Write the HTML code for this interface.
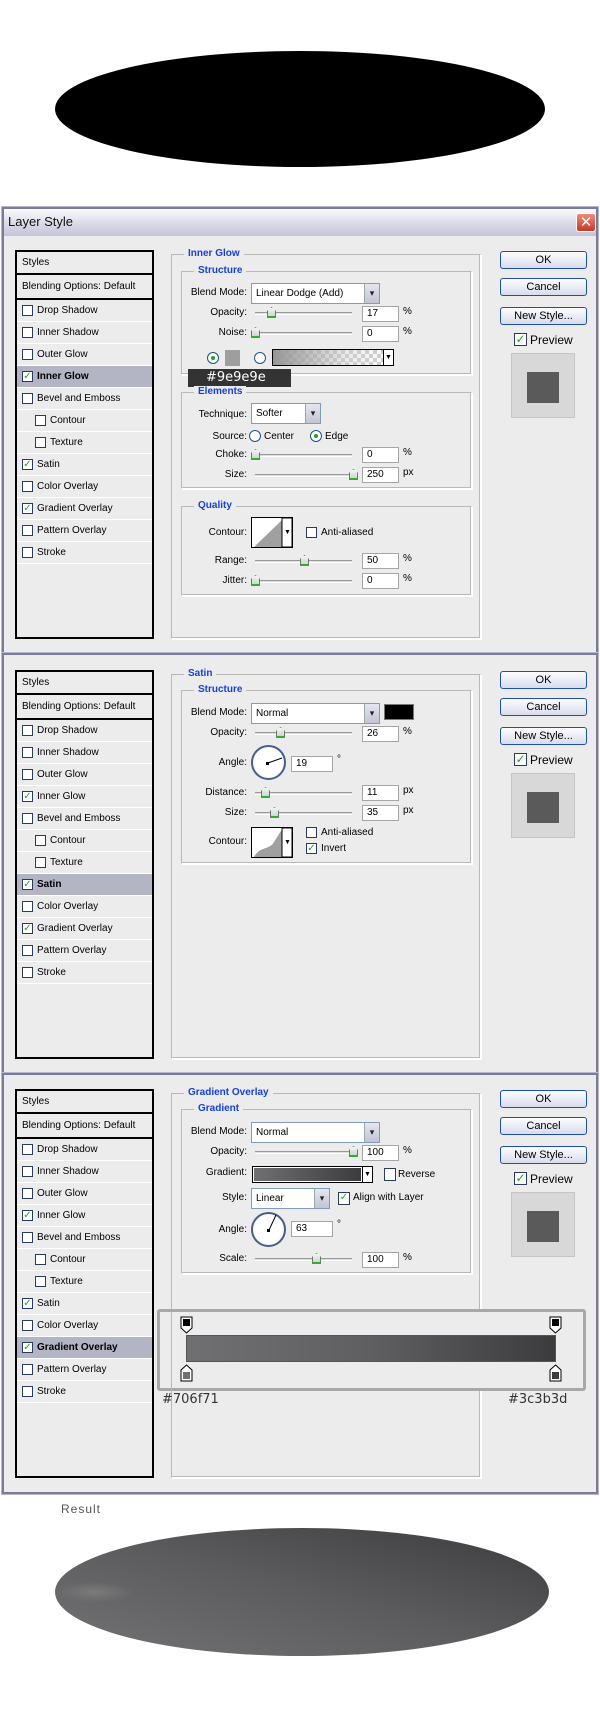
<!DOCTYPE html>
<html><head><meta charset="utf-8">
<style>
*{margin:0;padding:0;box-sizing:border-box}
body{width:600px;height:1709px;background:#fff;position:relative;overflow:hidden;font-family:"Liberation Sans","DejaVu Sans",sans-serif;font-size:10px;color:#000}
.a{position:absolute}
.frame{position:absolute;left:2px;width:596px;background:#ececec;border:2px solid #7a7a9c;outline:1px solid #b8b8cc}
.org{position:absolute;left:0;width:600px;height:440px}
.styles{position:absolute;left:15px;top:43px;width:139px;height:389px;border:2px solid #000;background:#ececec}
.row{position:absolute;left:0;width:135px;height:22px;border-bottom:1px solid #fff;line-height:21px;padding-left:20px;white-space:nowrap}
.row.sub{padding-left:33px}
.row.hl{background:#b3b5c4;font-weight:bold}
.cb{position:absolute;width:11px;height:11px;border:1px solid #2b3b5c;background:#fff;font-size:10px;line-height:9px;color:#21a121;text-align:center;font-weight:bold}
.row .cb{left:5px;top:5px}
.row.sub .cb{left:18px}
.grp{position:absolute;border:1px solid #b9b9b9;border-right-color:#fff;border-bottom-color:#fff;box-shadow:inset -1px -1px 0 #b9b9b9,1px 1px 0 #fff}
.gt{position:absolute;background:#ececec;color:#1740d8;font-weight:bold;padding:0 4px;font-size:10px;line-height:12px}
.lbl{position:absolute;text-align:right;width:100px;line-height:12px}
.sel{position:absolute;height:21px;background:#fff;border:1px solid #7f9db9;line-height:19px;padding-left:4px}
.sel b{position:absolute;right:0;top:0;width:15px;height:19px;background:linear-gradient(#e6e6f0,#c2c4d4);border-left:1px solid #9aa;font-size:9px;text-align:center;line-height:19px;color:#222}
.trk{position:absolute;height:3px;border-top:1px solid #999;border-bottom:1px solid #fff;background:#ddd;width:97px;left:255px}
.th{position:absolute;width:9px;height:11px;background:linear-gradient(#f4f4f4,#cfd6cf);border:1px solid #6a7a6a;border-bottom:2px solid #2fae2f;clip-path:polygon(50% 0,100% 35%,100% 100%,0 100%,0 35%)}
.inp{position:absolute;width:37px;height:16px;background:#fff;border:1px solid #a5a5a5;line-height:14px;padding-left:4px}
.unit{position:absolute;line-height:12px}
.btn{position:absolute;left:500px;width:87px;height:18px;border:1px solid #1f4fae;border-radius:3px;background:linear-gradient(#fdfdff,#d9dcec);text-align:center;line-height:16px;font-size:11px}
.pv{position:absolute;left:511px;width:64px;height:65px;background:#d8d8d8;border:1px solid #c4c4c4}
.pv i{position:absolute;left:15px;top:18px;width:32px;height:31px;background:#5a5a5a}
.rad{position:absolute;width:12px;height:12px;border-radius:50%;border:1px solid #1d5283;background:#fff}
.rad.on::after{content:"";position:absolute;left:3px;top:3px;width:4px;height:4px;border-radius:50%;background:#21a121}
.dial{position:absolute;width:35px;height:35px;border-radius:50%;border:2px solid #4a5d8a;background:radial-gradient(#fff 60%,#dde);}
</style></head><body>

<svg class="a" style="left:0;top:0" width="600" height="200"><ellipse cx="300" cy="109" rx="245" ry="58" fill="#000"/></svg>

<!-- PANEL 1 -->
<div class="frame" style="top:207px;height:447px"></div>
<div class="a" style="left:4px;top:209px;width:592px;height:27px;background:linear-gradient(#fafafd,#d7d7e6 60%,#c4c4d8)"></div>
<div class="a" style="left:8px;top:214px;font-size:13px;line-height:16px;color:#111">Layer Style</div>
<div class="a" style="left:576px;top:213px;width:20px;height:19px;background:linear-gradient(#f08a7a,#c83a24);border:1px solid #fff;border-radius:3px;color:#fff;text-align:center;font-size:15px;line-height:17px">✕</div>

<div class="org" style="top:207px">
<div class="styles">
<div class="row" style="top:0;height:23px;padding-left:5px;border-bottom:2px solid #000">Styles</div>
<div class="row" style="top:23px;height:25px;padding-left:5px;border-bottom:2px solid #000;line-height:23px">Blending Options: Default</div>
<div class="row" style="top:48px"><span class="cb"></span>Drop Shadow</div>
<div class="row" style="top:70px"><span class="cb"></span>Inner Shadow</div>
<div class="row" style="top:92px"><span class="cb"></span>Outer Glow</div>
<div class="row hl" style="top:114px"><span class="cb">✓</span>Inner Glow</div>
<div class="row" style="top:136px"><span class="cb"></span>Bevel and Emboss</div>
<div class="row sub" style="top:158px"><span class="cb"></span>Contour</div>
<div class="row sub" style="top:180px"><span class="cb"></span>Texture</div>
<div class="row" style="top:202px"><span class="cb">✓</span>Satin</div>
<div class="row" style="top:224px"><span class="cb"></span>Color Overlay</div>
<div class="row" style="top:246px"><span class="cb">✓</span>Gradient Overlay</div>
<div class="row" style="top:268px"><span class="cb"></span>Pattern Overlay</div>
<div class="row" style="top:290px"><span class="cb"></span>Stroke</div>
</div>
<div class="grp" style="left:171px;top:47px;width:310px;height:385px"></div><div class="gt" style="left:184px;top:41px">Inner Glow</div>
<div class="grp" style="left:181px;top:64px;width:291px;height:104px"></div><div class="gt" style="left:194px;top:58px">Structure</div>
<div class="lbl" style="left:147px;top:80px">Blend Mode:</div>
<div class="sel" style="left:251px;top:76px;width:129px">Linear Dodge (Add)<b>▾</b></div>
<div class="lbl" style="left:147px;top:100px">Opacity:</div><div class="trk" style="top:105px"></div><div class="th" style="left:267px;top:100px"></div><div class="inp" style="left:362px;top:99px">17</div><div class="unit" style="left:403px;top:99px">%</div>
<div class="lbl" style="left:147px;top:120px">Noise:</div><div class="trk" style="top:125px"></div><div class="th" style="left:251px;top:120px"></div><div class="inp" style="left:362px;top:119px">0</div><div class="unit" style="left:403px;top:119px">%</div>
<div class="rad on" style="left:207px;top:145px"></div><div class="a" style="left:225px;top:143px;width:15px;height:16px;background:#9e9e9e"></div>
<div class="rad" style="left:254px;top:145px"></div>
<div class="a" style="left:272px;top:142px;width:122px;height:17px;border:1px solid #000;background:linear-gradient(90deg,rgba(150,150,150,1),rgba(200,200,200,.4) 60%,rgba(255,255,255,0)),repeating-conic-gradient(#d0d0d0 0 25%,#fff 0 50%) 0 0/8px 8px;"></div>
<div class="a" style="left:383px;top:143px;width:10px;height:15px;background:#fff;border-left:1px solid #000;font-size:7px;text-align:center;line-height:15px">▼</div>
<div class="a" style="left:188px;top:162px;width:103px;height:18px;background:#333;color:#fff;font-size:13px;line-height:18px;padding-left:18px;font-family:'DejaVu Sans',sans-serif">#9e9e9e</div>
<div class="grp" style="left:181px;top:185px;width:291px;height:97px"></div><div class="gt" style="left:194px;top:179px">Elements</div>
<div class="lbl" style="left:147px;top:202px">Technique:</div>
<div class="sel" style="left:251px;top:196px;width:70px">Softer<b>▾</b></div>
<div class="lbl" style="left:147px;top:224px">Source:</div>
<div class="rad" style="left:249px;top:223px"></div><div class="unit" style="left:264px;top:224px">Center</div>
<div class="rad on" style="left:310px;top:223px"></div><div class="unit" style="left:325px;top:224px">Edge</div>
<div class="lbl" style="left:147px;top:242px">Choke:</div><div class="trk" style="top:247px"></div><div class="th" style="left:251px;top:242px"></div><div class="inp" style="left:362px;top:240px">0</div><div class="unit" style="left:403px;top:240px">%</div>
<div class="lbl" style="left:147px;top:262px">Size:</div><div class="trk" style="top:267px"></div><div class="th" style="left:349px;top:262px"></div><div class="inp" style="left:362px;top:260px">250</div><div class="unit" style="left:403px;top:260px">px</div>
<div class="grp" style="left:181px;top:299px;width:291px;height:90px"></div><div class="gt" style="left:194px;top:293px">Quality</div>
<div class="lbl" style="left:147px;top:320px">Contour:</div>
<div class="a" style="left:251px;top:310px;width:42px;height:31px;background:#fff;border:1px solid #000"><svg width="40" height="29"><polygon points="2,29 30,2 30,29" fill="#a0a0a0"/><rect x="30" y="0" width="10" height="29" fill="#fff" stroke="#000"/><text x="32" y="16" font-size="7">▼</text></svg></div>
<div class="cb" style="left:306px;top:320px"></div><div class="unit" style="left:321px;top:320px">Anti-aliased</div>
<div class="lbl" style="left:147px;top:348px">Range:</div><div class="trk" style="top:353px"></div><div class="th" style="left:300px;top:348px"></div><div class="inp" style="left:362px;top:346px">50</div><div class="unit" style="left:403px;top:346px">%</div>
<div class="lbl" style="left:147px;top:368px">Jitter:</div><div class="trk" style="top:373px"></div><div class="th" style="left:251px;top:368px"></div><div class="inp" style="left:362px;top:366px">0</div><div class="unit" style="left:403px;top:366px">%</div>
<div class="btn" style="top:44px">OK</div><div class="btn" style="top:71px">Cancel</div><div class="btn" style="top:100px">New Style...</div>
<div class="cb" style="left:514px;top:126px;width:13px;height:13px;font-size:12px;line-height:11px">✓</div><div class="unit" style="left:530px;top:126px;font-size:12px;line-height:14px">Preview</div>
<div class="pv" style="top:146px"><i></i></div>
</div>

<!-- PANEL 2 -->
<div class="frame" style="top:653px;height:421px"></div>
<div class="org" style="top:627px">
<div class="styles">
<div class="row" style="top:0;height:23px;padding-left:5px;border-bottom:2px solid #000">Styles</div>
<div class="row" style="top:23px;height:25px;padding-left:5px;border-bottom:2px solid #000;line-height:23px">Blending Options: Default</div>
<div class="row" style="top:48px"><span class="cb"></span>Drop Shadow</div>
<div class="row" style="top:70px"><span class="cb"></span>Inner Shadow</div>
<div class="row" style="top:92px"><span class="cb"></span>Outer Glow</div>
<div class="row" style="top:114px"><span class="cb">✓</span>Inner Glow</div>
<div class="row" style="top:136px"><span class="cb"></span>Bevel and Emboss</div>
<div class="row sub" style="top:158px"><span class="cb"></span>Contour</div>
<div class="row sub" style="top:180px"><span class="cb"></span>Texture</div>
<div class="row hl" style="top:202px"><span class="cb">✓</span>Satin</div>
<div class="row" style="top:224px"><span class="cb"></span>Color Overlay</div>
<div class="row" style="top:246px"><span class="cb">✓</span>Gradient Overlay</div>
<div class="row" style="top:268px"><span class="cb"></span>Pattern Overlay</div>
<div class="row" style="top:290px"><span class="cb"></span>Stroke</div>
</div>
<div class="grp" style="left:171px;top:47px;width:310px;height:385px"></div><div class="gt" style="left:184px;top:41px">Satin</div>
<div class="grp" style="left:181px;top:63px;width:291px;height:174px"></div><div class="gt" style="left:194px;top:57px">Structure</div>
<div class="lbl" style="left:147px;top:80px">Blend Mode:</div>
<div class="sel" style="left:251px;top:76px;width:129px">Normal<b>▾</b></div>
<div class="a" style="left:384px;top:77px;width:30px;height:16px;background:#000;border:1px solid #777"></div>
<div class="lbl" style="left:147px;top:100px">Opacity:</div><div class="trk" style="top:105px"></div><div class="th" style="left:276px;top:100px"></div><div class="inp" style="left:362px;top:99px">26</div><div class="unit" style="left:403px;top:99px">%</div>
<div class="lbl" style="left:147px;top:130px">Angle:</div>
<div class="dial" style="left:251px;top:118px"><svg width="31" height="31" class="a"><line x1="15" y1="16" x2="29" y2="11" stroke="#000" stroke-width="1"/><rect x="13" y="15" width="3" height="3"/></svg></div>
<div class="inp" style="left:291px;top:129px;width:42px">19</div><div class="unit" style="left:337px;top:127px">°</div>
<div class="lbl" style="left:147px;top:160px">Distance:</div><div class="trk" style="top:165px"></div><div class="th" style="left:261px;top:160px"></div><div class="inp" style="left:362px;top:158px">11</div><div class="unit" style="left:403px;top:158px">px</div>
<div class="lbl" style="left:147px;top:180px">Size:</div><div class="trk" style="top:185px"></div><div class="th" style="left:270px;top:180px"></div><div class="inp" style="left:362px;top:178px">35</div><div class="unit" style="left:403px;top:178px">px</div>
<div class="lbl" style="left:147px;top:209px">Contour:</div>
<div class="a" style="left:251px;top:200px;width:42px;height:31px;background:#fff;border:1px solid #000"><svg width="40" height="29"><path d="M2,29 C8,18 18,22 22,14 C26,8 28,4 30,2 L30,29 Z" fill="#a0a0a0"/><rect x="30" y="0" width="10" height="29" fill="#fff" stroke="#000"/><text x="32" y="16" font-size="7">▼</text></svg></div>
<div class="cb" style="left:306px;top:200px"></div><div class="unit" style="left:321px;top:200px">Anti-aliased</div>
<div class="cb" style="left:306px;top:216px">✓</div><div class="unit" style="left:321px;top:216px">Invert</div>
<div class="btn" style="top:44px">OK</div><div class="btn" style="top:71px">Cancel</div><div class="btn" style="top:100px">New Style...</div>
<div class="cb" style="left:514px;top:126px;width:13px;height:13px;font-size:12px;line-height:11px">✓</div><div class="unit" style="left:530px;top:126px;font-size:12px;line-height:14px">Preview</div>
<div class="pv" style="top:146px"><i></i></div>
</div>

<!-- PANEL 3 -->
<div class="frame" style="top:1073px;height:421px"></div>
<div class="org" style="top:1046px">
<div class="styles">
<div class="row" style="top:0;height:23px;padding-left:5px;border-bottom:2px solid #000">Styles</div>
<div class="row" style="top:23px;height:25px;padding-left:5px;border-bottom:2px solid #000;line-height:23px">Blending Options: Default</div>
<div class="row" style="top:48px"><span class="cb"></span>Drop Shadow</div>
<div class="row" style="top:70px"><span class="cb"></span>Inner Shadow</div>
<div class="row" style="top:92px"><span class="cb"></span>Outer Glow</div>
<div class="row" style="top:114px"><span class="cb">✓</span>Inner Glow</div>
<div class="row" style="top:136px"><span class="cb"></span>Bevel and Emboss</div>
<div class="row sub" style="top:158px"><span class="cb"></span>Contour</div>
<div class="row sub" style="top:180px"><span class="cb"></span>Texture</div>
<div class="row" style="top:202px"><span class="cb">✓</span>Satin</div>
<div class="row" style="top:224px"><span class="cb"></span>Color Overlay</div>
<div class="row hl" style="top:246px"><span class="cb">✓</span>Gradient Overlay</div>
<div class="row" style="top:268px"><span class="cb"></span>Pattern Overlay</div>
<div class="row" style="top:290px"><span class="cb"></span>Stroke</div>
</div>
<div class="grp" style="left:171px;top:47px;width:310px;height:385px"></div><div class="gt" style="left:184px;top:41px">Gradient Overlay</div>
<div class="grp" style="left:181px;top:63px;width:291px;height:165px"></div><div class="gt" style="left:194px;top:57px">Gradient</div>
<div class="lbl" style="left:147px;top:80px">Blend Mode:</div>
<div class="sel" style="left:251px;top:76px;width:129px">Normal<b>▾</b></div>
<div class="lbl" style="left:147px;top:100px">Opacity:</div><div class="trk" style="top:105px"></div><div class="th" style="left:349px;top:100px"></div><div class="inp" style="left:362px;top:99px">100</div><div class="unit" style="left:403px;top:99px">%</div>
<div class="lbl" style="left:147px;top:121px">Gradient:</div>
<div class="a" style="left:252px;top:120px;width:121px;height:17px;border:1px solid #000;background:#fff;padding:1px"><div style="width:107px;height:13px;background:linear-gradient(90deg,#706f71,#3c3b3d)"></div></div>
<div class="a" style="left:362px;top:121px;width:10px;height:15px;background:#fff;border-left:1px solid #000;font-size:7px;text-align:center;line-height:15px">▼</div>
<div class="cb" style="left:384px;top:122px;width:12px;height:13px"></div><div class="unit" style="left:398px;top:123px">Reverse</div>
<div class="lbl" style="left:147px;top:146px">Style:</div>
<div class="sel" style="left:251px;top:142px;width:79px">Linear<b>▾</b></div>
<div class="cb" style="left:338px;top:146px;width:12px;height:13px">✓</div><div class="unit" style="left:353px;top:146px">Align with Layer</div>
<div class="lbl" style="left:147px;top:178px">Angle:</div>
<div class="dial" style="left:251px;top:166px"><svg width="31" height="31" class="a"><line x1="16" y1="16" x2="23" y2="1" stroke="#000"/><rect x="14" y="15" width="3" height="3"/></svg></div>
<div class="inp" style="left:291px;top:175px;width:42px">63</div><div class="unit" style="left:337px;top:173px">°</div>
<div class="lbl" style="left:147px;top:207px">Scale:</div><div class="trk" style="top:212px"></div><div class="th" style="left:312px;top:207px"></div><div class="inp" style="left:362px;top:206px">100</div><div class="unit" style="left:403px;top:206px">%</div>
<div class="btn" style="top:44px">OK</div><div class="btn" style="top:71px">Cancel</div><div class="btn" style="top:100px">New Style...</div>
<div class="cb" style="left:514px;top:126px;width:13px;height:13px;font-size:12px;line-height:11px">✓</div><div class="unit" style="left:530px;top:126px;font-size:12px;line-height:14px">Preview</div>
<div class="pv" style="top:146px"><i></i></div>
<!-- gradient editor -->
<div class="a" style="left:157px;top:263px;width:429px;height:82px;border:3px solid #a8a8a8;border-radius:3px;background:#ececec"></div>
<div class="a" style="left:171px;top:266px;width:1px;height:100px;background:#b9b9b9"></div>
<div class="a" style="left:186px;top:289px;width:370px;height:27px;border:1px solid #555;background:linear-gradient(90deg,#706f71,#5f5e60 50%,#3c3b3d)"></div>
<svg class="a" style="left:180px;top:270px" width="14" height="18"><path d="M1,1 H12 V12 L6.5,17 L1,12 Z" fill="#fff" stroke="#000"/><rect x="3" y="3" width="7" height="7" fill="#000"/></svg>
<svg class="a" style="left:549px;top:270px" width="14" height="18"><path d="M1,1 H12 V12 L6.5,17 L1,12 Z" fill="#fff" stroke="#000"/><rect x="3" y="3" width="7" height="7" fill="#000"/></svg>
<svg class="a" style="left:180px;top:318px" width="14" height="18"><path d="M6.5,1 L12,6 V17 H1 V6 Z" fill="#fff" stroke="#000"/><rect x="3" y="8" width="7" height="7" fill="#706f71"/></svg>
<svg class="a" style="left:549px;top:318px" width="14" height="18"><path d="M6.5,1 L12,6 V17 H1 V6 Z" fill="#fff" stroke="#000"/><rect x="3" y="8" width="7" height="7" fill="#3c3b3d"/></svg>
<div class="a" style="left:162px;top:346px;font-size:13px;line-height:16px;color:#333;font-family:'DejaVu Sans',sans-serif">#706f71</div>
<div class="a" style="left:508px;top:346px;font-size:13px;line-height:16px;color:#333;font-family:'DejaVu Sans',sans-serif">#3c3b3d</div>
</div>

<div class="a" style="left:61px;top:1502px;font-size:12px;color:#555;letter-spacing:1px">Result</div>
<svg class="a" style="left:0;top:1520px" width="600" height="150">
<defs>
<linearGradient id="g" x1="0" y1="1" x2="1" y2="0"><stop offset="0" stop-color="#737274"/><stop offset="0.5" stop-color="#5c5b5d"/><stop offset="1" stop-color="#3c3b3d"/></linearGradient>
<radialGradient id="s" cx="0.08" cy="0.5" r="0.08"><stop offset="0" stop-color="#8a8a8a" stop-opacity="0.6"/><stop offset="1" stop-color="#888" stop-opacity="0"/></radialGradient>
</defs>
<ellipse cx="302" cy="72" rx="247" ry="64" fill="url(#g)"/>
<ellipse cx="302" cy="72" rx="247" ry="64" fill="url(#s)"/>
</svg>
</body></html>
